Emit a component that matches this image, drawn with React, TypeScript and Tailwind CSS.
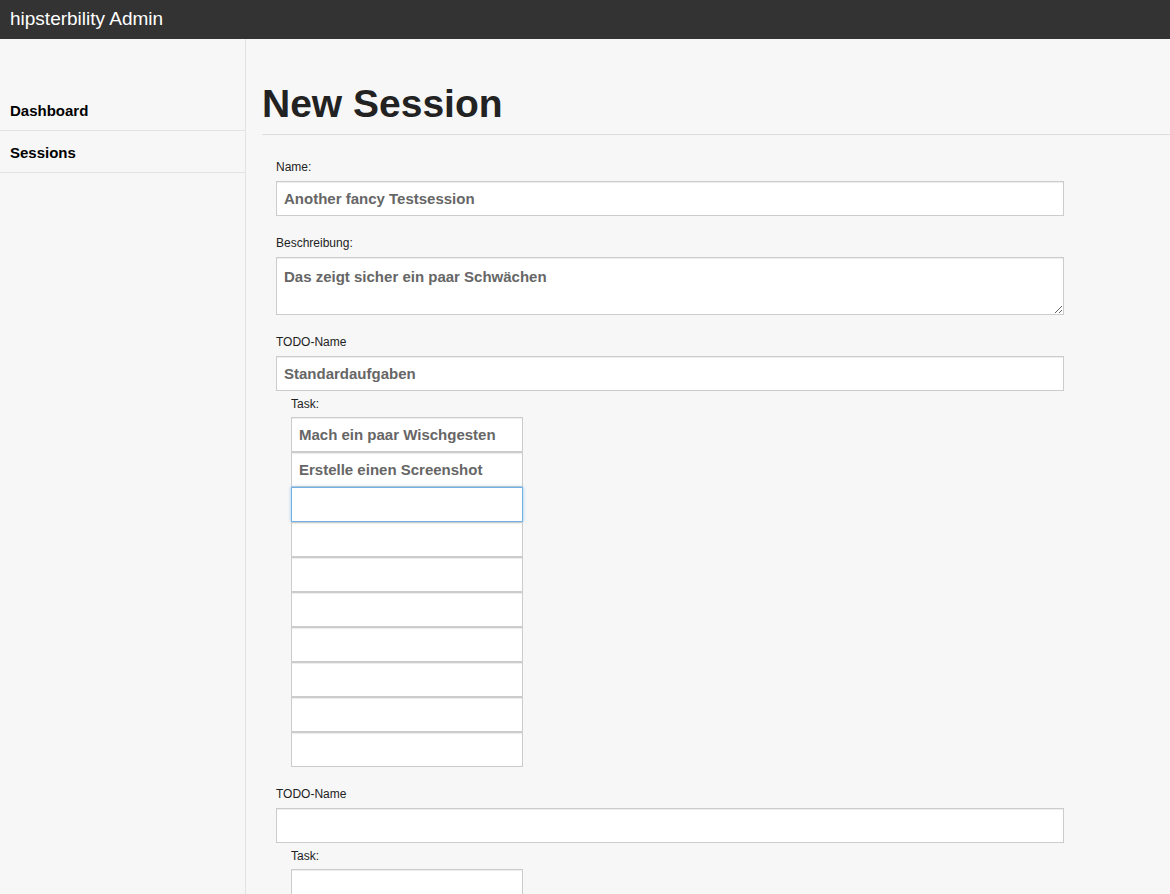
import React from 'react';

const tasks = ['Mach ein paar Wischgesten', 'Erstelle einen Screenshot', '', '', '', '', '', '', '', ''];

const inputBase =
  'block bg-white border px-[7px] text-[15px] font-bold text-[#666666] outline-none';

function Label({ children, indent }: { children: React.ReactNode; indent?: boolean }) {
  return (
    <div className={`text-[12px] leading-4 text-[#222] ${indent ? 'ml-[15px] mb-[5px]' : 'mb-[6px]'}`}>
      {children}
    </div>
  );
}

function TaskList({ items, focusIndex }: { items: string[]; focusIndex?: number }) {
  return (
    <div className="ml-[15px] w-[232px]">
      {items.map((t, i) => (
        <input
          key={i}
          readOnly
          value={t}
          className={`${inputBase} w-full h-[35px] ${
            i === focusIndex
              ? 'border-[#72b1e6] shadow-[0_0_3px_rgba(102,175,233,0.7)]'
              : 'border-[#cccccc] shadow-[inset_0_1px_1px_rgba(0,0,0,0.075)]'
          }`}
        />
      ))}
    </div>
  );
}

const plain = 'border-[#cccccc] shadow-[inset_0_1px_1px_rgba(0,0,0,0.075)]';

export default function App() {
  return (
    <div className="min-h-screen bg-[#f7f7f7] font-['Liberation_Sans',Arial,sans-serif]">
      <header className="h-[39px] bg-[#333333] flex items-center px-[10px]">
        <span className="text-white text-[19px]">hipsterbility Admin</span>
      </header>

      <div className="flex">
        <aside className="w-[246px] shrink-0 border-r border-[#e3e3e3] min-h-[856px] pt-[50px]">
          <nav>
            {['Dashboard', 'Sessions'].map((item) => (
              <div
                key={item}
                className="h-[42px] flex items-center pt-[4px] px-[10px] border-b border-[#e3e3e3] text-[15px] font-bold text-black"
              >
                {item}
              </div>
            ))}
          </nav>
        </aside>

        <main className="flex-1 pl-[16px] pt-[45px]">
          <h1 className="text-[39px] leading-none font-bold text-[#222222] pb-[11px] border-b border-[#dddddd]">
            New Session
          </h1>

          <form className="pl-[14px] pt-[24px] w-[802px]">
            <Label>Name:</Label>
            <input readOnly value="Another fancy Testsession" className={`${inputBase} ${plain} w-full h-[35px]`} />

            <div className="mt-[19px]">
              <Label>Beschreibung:</Label>
              <textarea
                readOnly
                value="Das zeigt sicher ein paar Schwächen"
                className={`${inputBase} ${plain} w-full h-[58px] pt-[8px] resize-y`}
              />
            </div>

            <div className="mt-[19px]">
              <Label>TODO-Name</Label>
              <input readOnly value="Standardaufgaben" className={`${inputBase} ${plain} w-full h-[35px]`} />
            </div>

            <div className="mt-[5px]">
              <Label indent>Task:</Label>
              <TaskList items={tasks} focusIndex={2} />
            </div>

            <div className="mt-[19px]">
              <Label>TODO-Name</Label>
              <input readOnly value="" className={`${inputBase} ${plain} w-full h-[35px]`} />
            </div>

            <div className="mt-[5px]">
              <Label indent>Task:</Label>
              <TaskList items={['', '', '']} />
            </div>
          </form>
        </main>
      </div>
    </div>
  );
}
